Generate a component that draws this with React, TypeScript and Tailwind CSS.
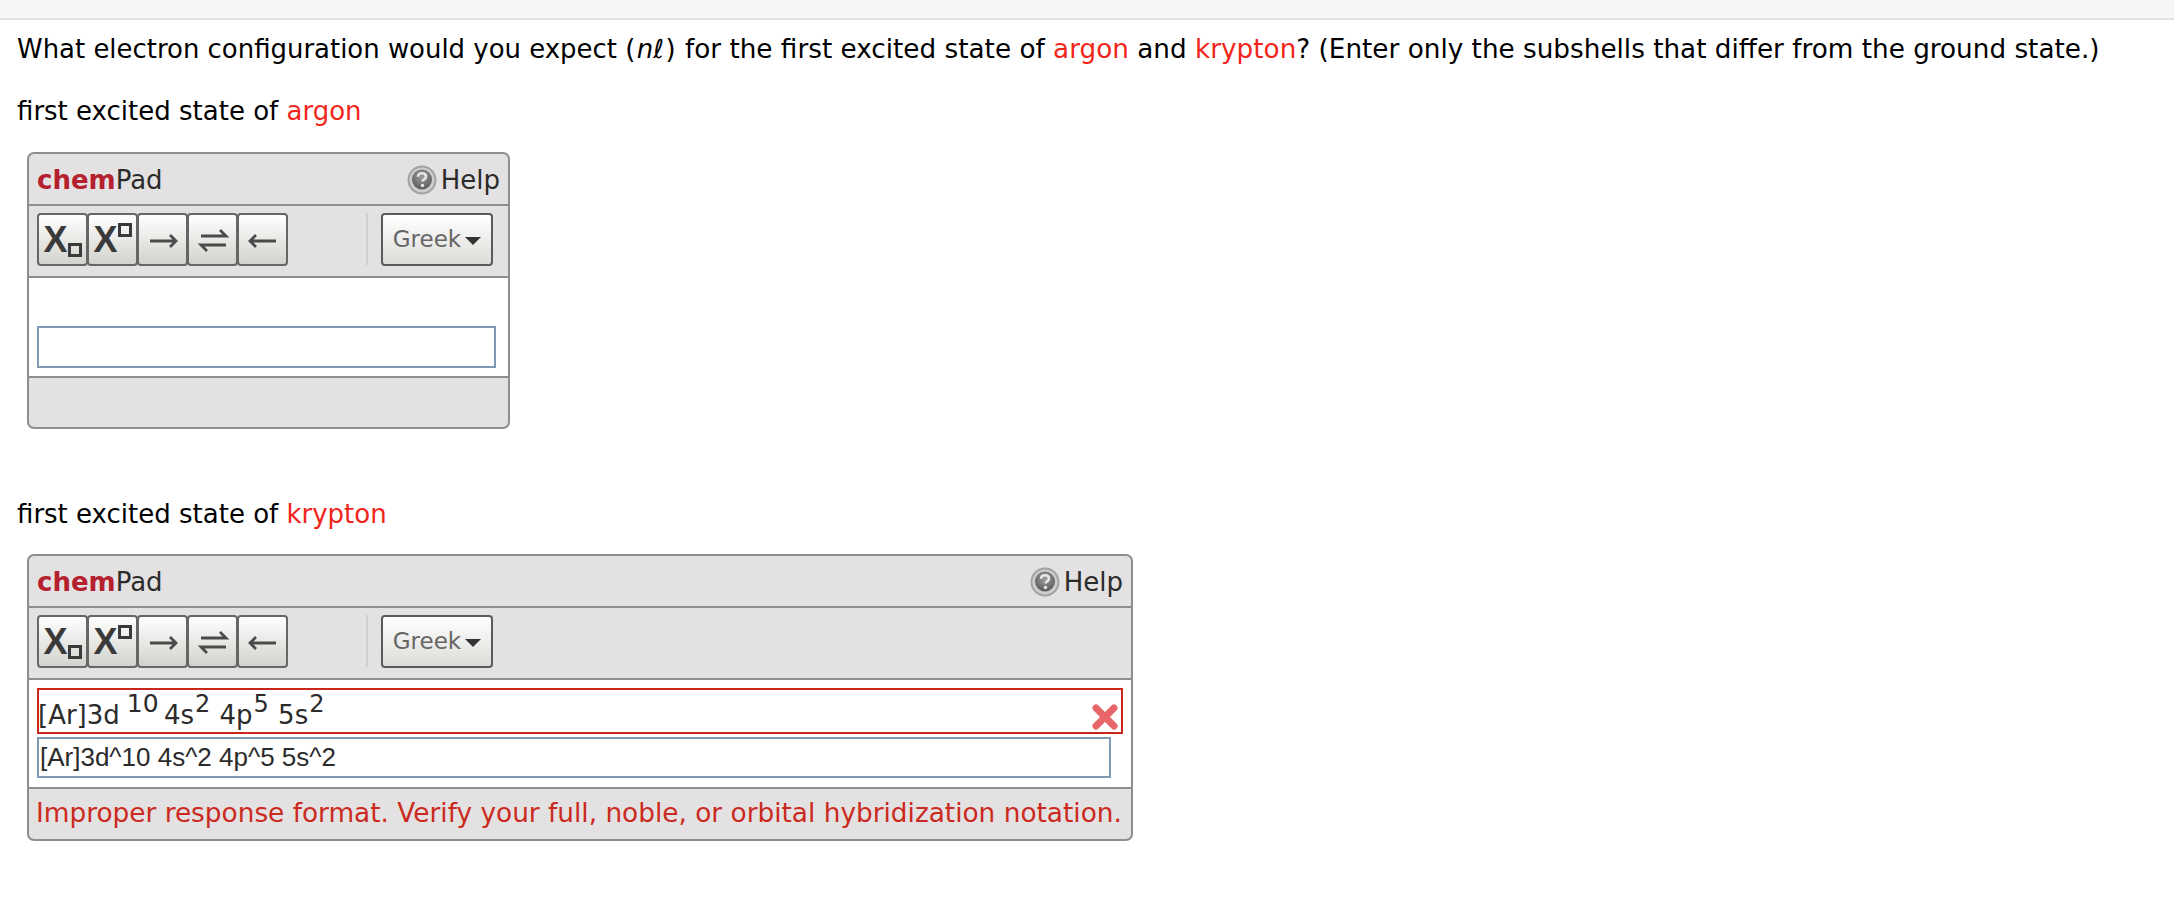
const font = "font-['DejaVu_Sans',Verdana,sans-serif]";

function HelpIcon() {
  return (
    <svg width="30" height="30" viewBox="0 0 30 30" className="shrink-0">
      <defs>
        <radialGradient id="h" cx="50%" cy="35%" r="65%">
          <stop offset="0%" stopColor="#9c9c9c" />
          <stop offset="70%" stopColor="#707070" />
          <stop offset="100%" stopColor="#585858" />
        </radialGradient>
      </defs>
      <circle cx="15" cy="15" r="14.5" fill="#a3a3a3" />
      <circle cx="15" cy="15" r="12.5" fill="#cdcdcd" />
      <circle cx="15" cy="14.5" r="10" fill="url(#h)" />
      <path d="M11 11.8c0-2.4 1.8-3.6 4-3.6s4 1.2 4 3.3c0 2.8-3.4 2.6-3.4 5" fill="none" stroke="#e6e6e6" strokeWidth="2.6" />
      <circle cx="15.5" cy="20.5" r="1.7" fill="#e6e6e6" />
    </svg>
  );
}

function Arrow({ kind }: { kind: "right" | "left" | "eq" }) {
  return (
    <svg width="34" height="28" viewBox="0 0 34 28" fill="none" stroke="#4a4a4a" strokeWidth="2.8">
      {kind === "right" && <path d="M4 15h26M24 9l6 6-6 6" />}
      {kind === "left" && <path d="M30 15H4M10 9l-6 6 6 6" />}
      {kind === "eq" && <path d="M5 10h25l-6-6M30 19H5l6 6" />}
    </svg>
  );
}

function ToolButton({ children, first }: { children: React.ReactNode; first?: boolean }) {
  return (
    <div className={`flex h-[53px] w-[51px] items-center justify-center rounded-[4px] border-2 border-[#666] bg-gradient-to-b from-white to-[#d2d3cd] ${first ? "" : "-ml-[1px]"}`}>
      {children}
    </div>
  );
}

function Sup({ children }: { children: React.ReactNode }) {
  return <sup className="mx-[1px] text-[24px]">{children}</sup>;
}

function Panel({ width, children, footer }: { width: string; children: React.ReactNode; footer?: React.ReactNode }) {
  return (
    <div className={`ml-[10px] overflow-hidden rounded-[7px] border-2 border-[#8e8e8e] bg-[#e4e1e2] ${width} ${font}`}>
      <div className="flex h-[50px] items-center justify-between pt-[2px] pr-[8px] pl-[8px]">
        <div className="text-[26px] text-[#2b2b2b]">
          <span className="font-bold text-[#b5202f]">chem</span>Pad
        </div>
        <div className="flex items-center gap-[4px] text-[26px] text-[#2b2b2b]">
          <HelpIcon />
          Help
        </div>
      </div>
      <div className="flex h-[72px] items-start border-t-2 border-[#8e8e8e] pt-[7px] pl-[8px]">
        <ToolButton first>
          <span className="font-['Liberation_Sans',Arial,sans-serif] text-[36px] leading-none font-bold text-[#3a3a3a]">X</span>
          <span className="mt-[20px] h-[14px] w-[14px] border-[3px] border-[#3a3a3a]" />
        </ToolButton>
        <ToolButton>
          <span className="font-['Liberation_Sans',Arial,sans-serif] text-[36px] leading-none font-bold text-[#3a3a3a]">X</span>
          <span className="mb-[20px] h-[14px] w-[14px] border-[3px] border-[#3a3a3a]" />
        </ToolButton>
        <ToolButton><Arrow kind="right" /></ToolButton>
        <ToolButton><Arrow kind="eq" /></ToolButton>
        <ToolButton><Arrow kind="left" /></ToolButton>
        <div className="ml-[78px] h-[52px] w-[2px] bg-[#cfcfcf]" />
        <div className="ml-[13px] flex h-[53px] w-[112px] items-center justify-center gap-[4px] rounded-[4px] border-2 border-[#5a5a5a] bg-gradient-to-b from-white to-[#dcdcd8] text-[23px] text-[#666]">
          Greek
          <span className="mt-[3px] h-0 w-0 border-x-[8px] border-t-[8px] border-x-transparent border-t-[#333]" />
        </div>
      </div>
      <div className="border-y-2 border-[#8e8e8e] bg-white">{children}</div>
      {footer ?? <div className="h-[49px]" />}
    </div>
  );
}

export default function App() {
  return (
    <div className={`min-h-[916px] bg-white text-black ${font}`}>
      <div className="h-[20px] border-b-2 border-[#e2e2e2] bg-[#f6f6f6]" />
      <div className="pl-[17px]">
        <p className="mt-[11px] text-[25.94px] leading-[36px] whitespace-nowrap">
          What electron configuration would you expect (<i className="mx-[1.5px]">nℓ</i>)
          <span className="ml-[1px] text-[26.28px]">
            {" "}for the first excited state of <span className="text-[#f1261b]">argon</span> and <span className="text-[#f1261b]">krypton</span>? (Enter only the subshells that differ from the ground state.)
          </span>
        </p>
        <p className="mt-[26px] text-[26px] leading-[36px]">
          first excited state of <span className="text-[#f1261b]">argon</span>
        </p>
        <div className="mt-[23px]">
          <Panel width="w-[483px]">
            <div className="px-[8px] pt-[48px] pb-[8px]">
              <div className="h-[42px] w-[459px] border-2 border-[#7f9ab5] bg-white" />
            </div>
          </Panel>
        </div>
        <p className="mt-[67px] text-[26px] leading-[36px]">
          first excited state of <span className="text-[#f1261b]">krypton</span>
        </p>
        <div className="mt-[22px]">
          <Panel
            width="w-[1106px]"
            footer={<div className="flex h-[50px] items-center pl-[7px] text-[26.35px] whitespace-nowrap text-[#cb2a20]">Improper response format. Verify your full, noble, or orbital hybridization notation.</div>}
          >
            <div className="px-[8px] pt-[8px] pb-[9px]">
              <div className="relative flex h-[46px] w-[1086px] items-end border-2 border-[#c9261c] text-[26px] leading-[34px] text-[#2b2b2b]">
                <span className="-ml-[1px]">[Ar]3d<sup className="mr-[-3px] ml-[7px] text-[25px]">10</sup> 4s<Sup>2</Sup> 4p<Sup>5</Sup> 5s<Sup>2</Sup></span>
                <svg className="absolute right-[2px] bottom-[1px]" width="28" height="28" viewBox="0 0 28 28">
                  <path d="M5 5l18 18M23 5L5 23" stroke="#e8666a" strokeWidth="7" strokeLinecap="round" />
                </svg>
              </div>
              <div className="mt-[3px] flex h-[41px] w-[1074px] items-center border-2 border-[#7f9ab5] pl-[1px] font-['Liberation_Sans',Arial,sans-serif] text-[26px] text-[#2b2b2b]">
                [Ar]3d^10 4s^2 4p^5 5s^2
              </div>
            </div>
          </Panel>
        </div>
      </div>
    </div>
  );
}
